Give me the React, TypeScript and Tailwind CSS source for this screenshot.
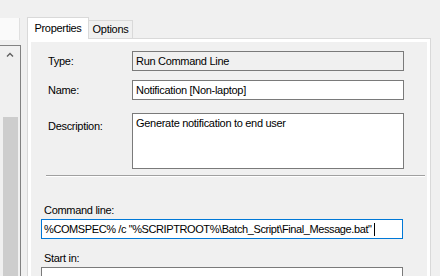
import React from "react";

const font = "font-['Liberation_Sans',Arial,sans-serif] text-[11px] tracking-[-0.3px] text-black";

function Field({ label, value, readOnly, height = 20 }: { label: string; value: string; readOnly?: boolean; height?: number }) {
  const multi = height > 20;
  return (
    <div className={`flex ${multi ? "items-start" : "items-center"}`}>
      <div className={`w-[84px] shrink-0 pl-[17px] box-content ${multi ? "pt-[5px]" : ""}`}>{label}</div>
      <div
        className={`w-[272px] border border-[#7a7a7a] px-[3px] leading-[13px] ${readOnly ? "bg-[#f0f0f0]" : "bg-white"} ${multi ? "pt-[3px]" : "flex items-center"}`}
        style={{ height }}
      >
        {value}
      </div>
    </div>
  );
}

export default function App() {
  return (
    <div className={`w-[440px] h-[276px] bg-[#f0f0f0] flex overflow-hidden ${font}`}>
      {/* left pane with scrollbar */}
      <div className="w-[21px] shrink-0 flex flex-col">
        <div className="h-[18px]" />
        <div className="h-[22px] w-[20px] bg-[#fafafa] border-r border-[#e0e0e0]" />
        <div className="h-[5px]" />
        <div className="flex-1 flex flex-col border-t border-r border-[#828282] bg-[#f0f0f0]">
          <div className="h-[17px] flex items-center justify-center">
            <svg width="8" height="5" viewBox="0 0 8 5">
              <path d="M1 4.5 L4 1.5 L7 4.5" fill="none" stroke="#606060" strokeWidth="1.4" />
            </svg>
          </div>
          <div className="h-[54px]" />
          <div className="flex-1 ml-[3px] mr-[2px] bg-[#cdcdcd]" />
        </div>
      </div>

      {/* tab control */}
      <div className="ml-[6px] w-[404px] flex flex-col">
        <div className="pt-[17px] flex items-end">
          <div className="relative z-10 -mb-px h-[22px] w-[62px] bg-white border border-b-0 border-[#d9d9d9] flex items-start justify-center pt-[4px] leading-[13px]">
            Properties
          </div>
          <div className="h-[18px] w-[44px] bg-[#f0f0f0] border border-l-0 border-b-0 border-[#d9d9d9] flex items-center justify-center leading-[13px]">
            Options
          </div>
        </div>
        <div className="flex-1 border border-[#d9d9d9] bg-white p-[3px] flex">
          <div className="flex-1 bg-[#f0f0f0] flex flex-col">
            <div className="mt-[9px]">
              <Field label="Type:" value="Run Command Line" readOnly />
            </div>
            <div className="mt-[9px]">
              <Field label="Name:" value="Notification [Non-laptop]" />
            </div>
            <div className="mt-[13px]">
              <Field label="Description:" value="Generate notification to end user" height={56} />
            </div>
            <div className="mt-[6px] ml-[15px] mr-[2px] border-t border-[#a0a0a0] border-b border-b-white" />

            <div className="mt-[27px] pl-[13px] leading-[13px]">Command line:</div>
            <div className="mt-[2px] ml-[10px] w-[362px] h-[20px] bg-white border border-[#0078d7] px-[2px] flex items-center leading-[13px] whitespace-nowrap overflow-hidden">
              <span className="tracking-[-0.4px]">%COMSPEC% /c "%SCRIPTROOT%\Batch_Script\Final_Message.bat"</span>
              <span className="ml-[2px] w-px h-[13px] bg-black" />
            </div>

            <div className="mt-[13px] pl-[13px] leading-[13px]">Start in:</div>
            <div className="mt-[2px] ml-[10px] w-[362px] h-[20px] bg-white border border-[#7a7a7a]" />
          </div>
        </div>
      </div>
    </div>
  );
}
